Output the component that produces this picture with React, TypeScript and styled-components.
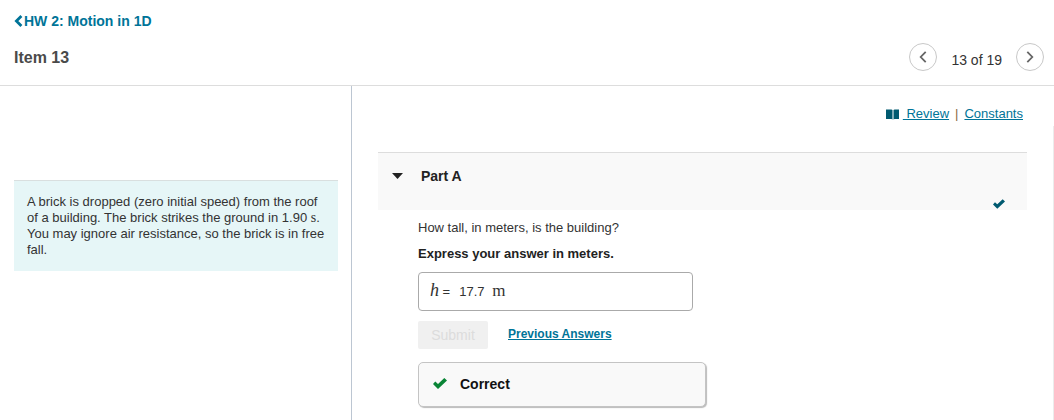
import React from "react";
import styled, { createGlobalStyle } from "styled-components";

const sans = `"Liberation Sans", Arial, sans-serif`;
const serif = `"Liberation Serif", "Times New Roman", serif`;
const link = "#007498";

const GlobalStyle = createGlobalStyle`
  *, *::before, *::after { box-sizing: border-box; }
  html, body, #root { height: 100%; }
  body { margin: 0; background: #fff; color: #333; font: 13px/16px ${sans}; }
  h1, h2, p { margin: 0; }
  a { color: ${link}; }
  button { font: inherit; padding: 0; cursor: pointer; }
  svg { display: block; flex: none; }
`;

const Page = styled.div`
  display: flex;
  flex-direction: column;
  min-height: 100%;
`;

const Header = styled.header`
  display: flex;
  justify-content: space-between;
  align-items: flex-end;
  padding: 12px 10px 14px 14px;
  border-bottom: 1px solid #ddd;
`;

const Titles = styled.div`
  display: flex;
  flex-direction: column;
  gap: 19px;
  padding-bottom: 4px;
`;

const BackLink = styled.a`
  display: flex;
  align-items: center;
  gap: 1px;
  font-size: 14px;
  line-height: 18px;
  font-weight: bold;
  text-decoration: none;
`;

const ItemTitle = styled.h1`
  font-size: 16px;
  line-height: 18px;
  color: #4a4a4a;
`;

const Pager = styled.nav`
  display: flex;
  align-items: center;
  gap: 14px;
  font-size: 14px;
`;

const PagerText = styled.span`
  padding-top: 6px;
`;

const RoundButton = styled.button`
  display: grid;
  place-items: center;
  width: 28px;
  height: 28px;
  border: 1px solid #c8c8c8;
  border-radius: 50%;
  background: #fff;
`;

const Columns = styled.div`
  display: flex;
  flex: 1;
`;

const Sidebar = styled.aside`
  flex: 0 0 352px;
  padding: 94px 13px 0 14px;
  border-right: 1px solid #bcc6d2;
`;

const Problem = styled.p`
  padding: 13px;
  border-top: 1px solid #d9dfdf;
  background: #e6f6f7;
`;

const Unit = styled.span`
  font-family: ${serif};
  font-size: 14px;
`;

const Main = styled.main`
  flex: 1;
  min-width: 0;
  padding: 20px 26px 12px 26px;
`;

const ScrollEdge = styled.div`
  flex: 0 0 1px;
  margin-top: 40px;
  background: #ececec;
`;

const Resources = styled.div`
  display: flex;
  justify-content: flex-end;
  align-items: center;
  gap: 6px;
  padding-right: 4px;
  margin-bottom: 30px;
`;

const ReviewLink = styled.a`
  display: flex;
  align-items: center;
  gap: 3px;
  text-decoration: none;
`;

const ReviewText = styled.span`
  white-space: pre;
  text-decoration: underline;
`;

const Divider = styled.span`
  color: #8a6a3c;
`;

const PartHeader = styled.div`
  display: flex;
  justify-content: space-between;
  align-items: flex-end;
  height: 58px;
  padding: 0 22px 1px 0;
  border-top: 1px solid #ddd;
  background: #f9f9f9;
`;

const PartToggle = styled.button`
  display: flex;
  align-items: center;
  align-self: flex-start;
  gap: 18px;
  padding: 14px 14px 0;
  border: 0;
  background: none;
  color: #222;
  font-size: 14px;
  font-weight: bold;
  line-height: 18px;
`;

const PartBody = styled.section`
  padding: 10px 0 0 40px;
`;

const Instruction = styled.p`
  margin-top: 10px;
  font-weight: bold;
  color: #222;
`;

const AnswerBox = styled.div`
  display: flex;
  align-items: baseline;
  width: 275px;
  height: 39px;
  margin-top: 10px;
  padding: 9px 11px 0;
  border: 1px solid #aaa;
  border-radius: 4px;
`;

const AnswerLabel = styled.label`
  padding-right: 9px;
  i { font-family: ${serif}; font-size: 18px; }
`;

const AnswerInput = styled.input`
  width: 33px;
  padding: 0;
  border: 0;
  background: none;
  color: inherit;
  font: 13px/16px ${sans};
`;

const AnswerUnit = styled.span`
  font-family: ${serif};
  font-size: 17px;
`;

const Actions = styled.div`
  display: flex;
  align-items: center;
  gap: 20px;
  margin-top: 10px;
`;

const SubmitButton = styled.button`
  width: 70px;
  height: 28px;
  border: 0;
  border-radius: 2px;
  background: #f0f0f0;
  color: #dcdcdc;
  font-size: 14px;
`;

const HistoryLink = styled.a`
  padding-bottom: 2px;
  font-size: 12px;
  font-weight: bold;
`;

const Result = styled.div`
  display: flex;
  align-items: center;
  gap: 13px;
  width: 288px;
  height: 45px;
  margin-top: 13px;
  padding: 0 14px 2px;
  border: 1px solid #c4c4c4;
  border-radius: 5px;
  background: #f9f9f9;
  box-shadow: 1px 1px 1px #bbb;
  color: #111;
  font-size: 14px;
  font-weight: bold;
`;

const Chevron = ({ flip = false }: { flip?: boolean }) => (
  <svg width="8" height="12" viewBox="0 0 8 12" fill="none" stroke="#666" strokeWidth="1.8" aria-hidden>
    <path d={flip ? "M1.3.8 6.3 6l-5 5.200" : "M6.700.8 1.700 6l5 5.200"} />
  </svg>
);

const Check = ({ color, width }: { color: string; width: number }) => (
  <svg width={width} height={Math.round(width * 0.8)} viewBox="0 0 14 11" fill={color} aria-hidden>
    <path d="M0 6 2.300 3.500 5 5.900 11.300 0 14 2.500 5 11Z" />
  </svg>
);

export default function App() {
  return (
    <>
      <GlobalStyle />
      <Page>
        <Header>
          <Titles>
            <BackLink href="#">
              <svg width="9" height="12" viewBox="0 0 9 12" fill="none" stroke="currentColor" strokeWidth="2.8" aria-hidden>
                <path d="M7.4 1 2.4 6l5 5" />
              </svg>
              HW 2: Motion in 1D
            </BackLink>
            <ItemTitle>Item 13</ItemTitle>
          </Titles>
          <Pager aria-label="Items">
            <RoundButton aria-label="Previous item"><Chevron /></RoundButton>
            <PagerText>13 of 19</PagerText>
            <RoundButton aria-label="Next item"><Chevron flip /></RoundButton>
          </Pager>
        </Header>
        <Columns>
          <Sidebar>
            <Problem>
              A brick is dropped (zero initial speed) from the roof of a building. The brick strikes
              the ground in 1.90 <Unit>s</Unit>. You may ignore air resistance, so the brick is in
              free fall.
            </Problem>
          </Sidebar>
          <Main>
            <Resources>
              <ReviewLink href="#">
                <svg width="14" height="11" viewBox="0 0 14 11" fill="#005a70" aria-hidden>
                  <path d="M0 .5h5.500l1 .5v9.500l-1-.5H0ZM7.500 1l1-.5H13V10H8.500l-1 .5Z" />
                </svg>
                <ReviewText> Review</ReviewText>
              </ReviewLink>
              <Divider>|</Divider>
              <a href="#">Constants</a>
            </Resources>
            <PartHeader>
              <PartToggle aria-expanded="true">
                <svg width="11" height="6" viewBox="0 0 11 6" fill="#222" aria-hidden>
                  <path d="M0 0h11L5.500 6Z" />
                </svg>
                Part A
              </PartToggle>
              <Check color="#005a70" width={12} />
            </PartHeader>
            <PartBody>
              <p>How tall, in meters, is the building?</p>
              <Instruction>Express your answer in meters.</Instruction>
              <AnswerBox>
                <AnswerLabel htmlFor="height"><i>h</i> =</AnswerLabel>
                <AnswerInput id="height" type="text" defaultValue="17.7" readOnly />
                <AnswerUnit>m</AnswerUnit>
              </AnswerBox>
              <Actions>
                <SubmitButton disabled>Submit</SubmitButton>
                <HistoryLink href="#">Previous Answers</HistoryLink>
              </Actions>
              <Result role="status">
                <Check color="#0a8536" width={14} />
                Correct
              </Result>
            </PartBody>
          </Main>
          <ScrollEdge />
        </Columns>
      </Page>
    </>
  );
}
